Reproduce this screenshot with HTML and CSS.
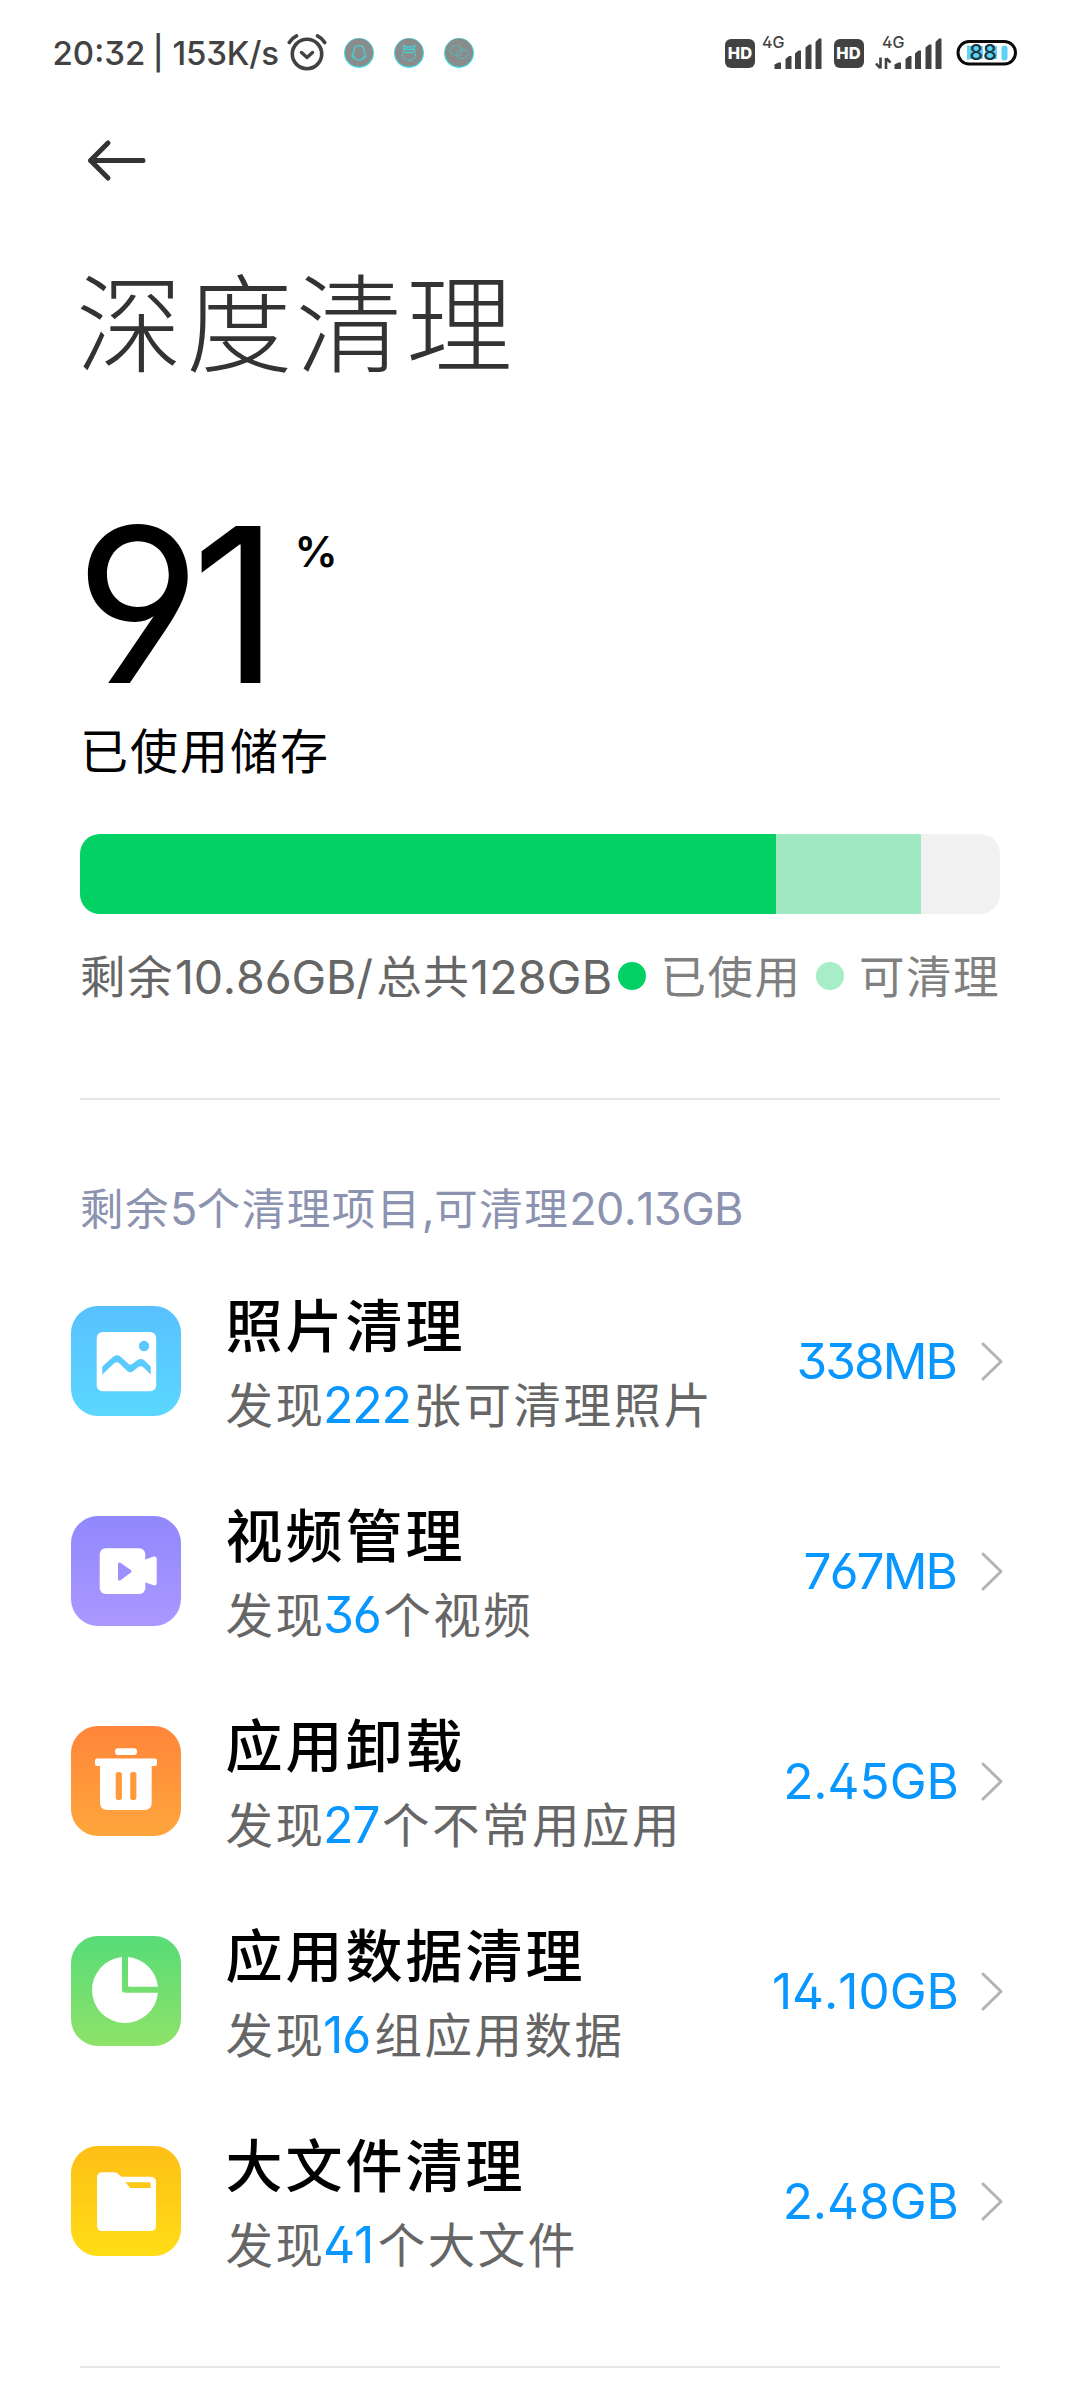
FILE: index.html
```html
<!DOCTYPE html>
<html lang="zh-CN">
<head>
<meta charset="utf-8">
<title>深度清理</title>
<link rel="stylesheet" href="styles.css">
</head>
<body>
<header class="status">
  <div class="status-left">
    <span class="clock">20:32</span>
    <span class="bar-sep">|</span>
    <span class="speed">153K/s</span>
    <svg class="alarm" width="40" height="38" viewBox="0 0 40 38" fill="none" stroke="#424242" stroke-linecap="round" stroke-linejoin="round">
      <circle cx="20" cy="21" r="14.7" stroke-width="3.6"/>
      <path d="M14.5 19.5l5.5 5 5.500-5" stroke-width="3.400"/>
      <path d="M2.300 9.500C4 6.500 6.500 4.300 9.500 2.800M37.700 9.500C36 6.500 33.500 4.300 30.500 2.800" stroke-width="3.600"/>
    </svg>
    <svg class="app-dot" width="34" height="34" viewBox="0 0 34 34">
      <circle cx="17" cy="17" r="15" fill="#40dbe0"/><circle cx="17" cy="16.600" r="14" fill="#8b8b8b"/>
      <path d="M17 9.500c-3.500 0-5 2.500-5 5.500-1.500 2.500-2.300 4.500-1.500 6 1 .3 1.500-.5 1.500-.5.5 2.500 2.500 3.500 5 3.500s4.500-1 5-3.500c0 0 .5.8 1.500.5.8-1.500 0-3.500-1.500-6 0-3-1.500-5.500-5-5.500z" fill="none" stroke="#4dc8cd" stroke-width="1.500"/>
    </svg>
    <svg class="app-dot" width="34" height="34" viewBox="0 0 34 34">
      <circle cx="17" cy="17" r="15" fill="#40dbe0"/><circle cx="17" cy="16.600" r="14" fill="#8b8b8b"/>
      <g fill="none" stroke="#4dc8cd" stroke-width="1.400"><path d="M11.500 14.500V9.500l3 1.500h5l3-1.500v5M12 13.500h10M12 16.500h10"/><circle cx="17" cy="18" r="6.500" stroke-dasharray="2 1"/></g>
    </svg>
    <svg class="app-dot" width="34" height="34" viewBox="0 0 34 34">
      <circle cx="17" cy="17" r="15" fill="#40dbe0"/><circle cx="17" cy="16.600" r="14" fill="#8b8b8b"/>
      <g fill="none" stroke="#4dc0c5" stroke-width="1.200" stroke-dasharray="2 1"><ellipse cx="14" cy="14.500" rx="6" ry="5"/><ellipse cx="20.500" cy="18" rx="5.500" ry="4.500"/></g>
    </svg>
  </div>
  <div class="status-right">
    <span class="hd">HD</span>
    <svg class="sig" width="62" height="38" viewBox="0 0 62 38">
      <text class="net" x="0" y="15">4G</text>
      <g fill="#424242"><path d="M12.500 36v-4.500l4-2h2.500V36z"/><path d="M23.500 36V26l3.500-3h2.500v13z"/><path d="M33 36V20.500l3.500-3h2.500V36z"/><path d="M43.500 36V14.500l3.500-3h2.500V36z"/><path d="M53.500 36V9l3.500-3.500h2.500V36z"/></g>
    </svg>
    <span class="hd">HD</span>
    <svg class="sig sig-b" width="69" height="38" viewBox="0 0 69 38">
      <text class="net" x="7" y="15">4G</text>
      <path d="M5.500 24.500v11M5 35l-4-4.500M11 36V25M11.500 25.500l4 4" stroke="#424242" stroke-width="2.600" fill="none"/>
      <g fill="#424242" transform="translate(7)"><path d="M12.500 36v-4.500l4-2h2.500V36z"/><path d="M23.500 36V26l3.500-3h2.500v13z"/><path d="M33 36V20.500l3.500-3h2.500V36z"/><path d="M43.500 36V14.500l3.500-3h2.500V36z"/><path d="M53.500 36V9l3.500-3.500h2.500V36z"/></g>
    </svg>
    <svg class="battery" width="62" height="28" viewBox="0 0 62 28">
      <rect x="2" y="2.500" width="57.500" height="22.500" rx="11.200" fill="#fff" stroke="#0a0a0a" stroke-width="3"/>
      <path d="M11 6.500h3v14h-3zM14 7h13v13H14zM29 7h12v13H29z" fill="#5cd3f5"/><rect x="45.500" y="6.500" width="6" height="15" rx="3" fill="#5cd3f5"/>
      <text x="27" y="21" text-anchor="middle" class="level">88</text>
    </svg>
  </div>
</header>

<nav class="nav">
  <svg width="60" height="44" viewBox="0 0 60 44" fill="none" stroke="#333" stroke-width="5" stroke-linecap="round" stroke-linejoin="round"><path d="M22 5L4.500 22.500 22 40M4.500 22.500H57"/></svg>
</nav>

<main>
  <h1 class="title">深度清理</h1>
  <section class="usage">
    <div class="percent"><span class="num">91</span><span class="unit">%</span></div>
    <div class="caption">已使用储存</div>
    <div class="meter"><div class="used" style="width:696px"></div><div class="cleanable" style="width:145px"></div></div>
    <div class="legend">
      <div class="total">剩余<span class="lat">10.86GB</span><span class="slash">/</span>总共<span>128GB</span></div>
      <div class="key key-used"><i class="dot"></i>已使用</div>
      <div class="key key-clean"><i class="dot light"></i>可清理</div>
    </div>
  </section>
  <hr class="rule">
  <h2 class="section-label">剩余<span>5</span>个清理项目<span>,</span>可清理<span>20.13GB</span></h2>
  <ul class="list">
    <li class="row">
      <svg class="icon" viewBox="0 0 110 110">
        <defs><linearGradient id="g1" x2="0" y2="1"><stop stop-color="#57c1ff"/><stop offset="1" stop-color="#5bd7ff"/></linearGradient></defs>
        <rect width="110" height="110" rx="27" fill="url(#g1)"/>
        <rect x="25.700" y="26" width="59.500" height="59.300" rx="6" fill="#fff"/>
        <circle cx="73" cy="40" r="5.200" fill="#5ac8ff"/>
        <path d="M31.300 60.500L42.500 50.500Q46 48 49.500 50.500L57.500 58Q59.300 59.500 61.200 58L66.500 54Q70 52 73.200 54.200L79.700 60.500V68.500L72.500 61.500Q70 59 67 61.200L62 65.200Q59.300 67.300 56.500 65.200L48.500 57.500Q46 55 43.200 57.200L31.300 68.500Z" fill="#5acbff"/>
      </svg>
      <div class="info"><h3>照片清理</h3><p>发现<b>222</b>张可清理照片</p></div>
      <span class="size mb">338MB</span>
      <svg class="chev" viewBox="0 0 24 42"><path d="M3 4l18 17.500L3 39"/></svg>
    </li>
    <li class="row">
      <svg class="icon" viewBox="0 0 110 110">
        <defs><linearGradient id="g2" x2="0" y2="1"><stop stop-color="#9088fd"/><stop offset="1" stop-color="#ab98ff"/></linearGradient></defs>
        <rect width="110" height="110" rx="27" fill="url(#g2)"/>
        <rect x="28.700" y="32.300" width="45.600" height="45.700" rx="6" fill="#fff"/>
        <path d="M73 43.700Q74.500 43.500 76 43L82.500 40.600Q85.700 39.800 85.700 43V67Q85.700 70 82.500 69.300L76 67Q74.500 66.300 73 66.300Z" fill="#fff"/>
        <path d="M48.500 48l10.500 7.300-10.500 7.700z" fill="#9b90fe" stroke="#9b90fe" stroke-width="3" stroke-linejoin="round"/>
      </svg>
      <div class="info"><h3>视频管理</h3><p>发现<b>36</b>个视频</p></div>
      <span class="size mb">767MB</span>
      <svg class="chev" viewBox="0 0 24 42"><path d="M3 4l18 17.500L3 39"/></svg>
    </li>
    <li class="row">
      <svg class="icon" viewBox="0 0 110 110">
        <defs><linearGradient id="g3" x2="0" y2="1"><stop stop-color="#ff853a"/><stop offset="1" stop-color="#ffa63c"/></linearGradient></defs>
        <rect width="110" height="110" rx="27" fill="url(#g3)"/>
        <g fill="#fff"><rect x="44" y="22.200" width="22" height="6.800" rx="3"/><rect x="24" y="32.500" width="62" height="7.500" rx="2"/><path d="M29 37h51.700v39.500q0 7.500-7.500 7.500H36.500q-7.500 0-7.500-7.500z"/></g>
        <g fill="#ff9a3b"><rect x="44.700" y="46" width="6.200" height="28" rx="2.500"/><rect x="59.200" y="46" width="6.200" height="28" rx="2.500"/></g>
      </svg>
      <div class="info"><h3>应用卸载</h3><p>发现<b>27</b>个不常用应用</p></div>
      <span class="size">2.45GB</span>
      <svg class="chev" viewBox="0 0 24 42"><path d="M3 4l18 17.500L3 39"/></svg>
    </li>
    <li class="row">
      <svg class="icon" viewBox="0 0 110 110">
        <defs><linearGradient id="g4" x2="0" y2="1"><stop stop-color="#57dc77"/><stop offset="1" stop-color="#8ee269"/></linearGradient></defs>
        <rect width="110" height="110" rx="27" fill="url(#g4)"/>
        <g fill="#fff"><path d="M51 21.100V53.700Q51 56.700 54 56.700H86.900A33 33 0 1 1 51 21.100Z"/><path d="M57 21.100A33 33 0 0 1 86.900 50.700H58.500Q57 50.700 57 49.200Z"/></g>
      </svg>
      <div class="info"><h3>应用数据清理</h3><p>发现<b class="ones">16</b>组应用数据</p></div>
      <span class="size">14.10GB</span>
      <svg class="chev" viewBox="0 0 24 42"><path d="M3 4l18 17.500L3 39"/></svg>
    </li>
    <li class="row">
      <svg class="icon" viewBox="0 0 110 110">
        <defs><linearGradient id="g5" x2="0" y2="1"><stop stop-color="#fdbf17"/><stop offset="1" stop-color="#ffdd15"/></linearGradient></defs>
        <rect width="110" height="110" rx="27" fill="url(#g5)"/>
        <path d="M31.500 26.300H43Q45.700 26.300 47.300 28L50.300 30.700H79.500Q85 30.700 85 36.200V79.500Q85 85 79.500 85H31.500Q26 85 26 79.500V31.800Q26 26.300 31.500 26.300Z" fill="#fff"/>
        <path d="M54.300 36.300H78Q79.700 36.300 79.700 38V42H59.300Z" fill="#fec816"/>
      </svg>
      <div class="info"><h3>大文件清理</h3><p>发现<b class="ones">41</b>个大文件</p></div>
      <span class="size">2.48GB</span>
      <svg class="chev" viewBox="0 0 24 42"><path d="M3 4l18 17.500L3 39"/></svg>
    </li>
  </ul>
  <hr class="rule rule-end">
</main>
</body>
</html>
```
FILE: styles.css
```css
* { box-sizing: border-box; margin: 0; padding: 0; }

body {
  width: 1080px;
  height: 2400px;
  overflow: hidden;
  background: #fff;
  color: #000;
  font-family: Inter, "Noto Sans CJK SC", sans-serif;
  font-feature-settings: "ss01", "cv03", "cv04";
  font-kerning: none;
  white-space: nowrap;
}

svg { display: block; flex: none; }

.status {
  display: flex;
  justify-content: space-between;
  height: 106px;
  padding: 0 62.5px 0 52.5px;
  color: #424242;
  font-size: 33px;
  font-weight: 500;
  line-height: 106px;
}
.status-left, .status-right { display: flex; align-items: center; }
.clock { width: 100px; }
.bar-sep { width: 20px; }
.speed { width: 114.5px; letter-spacing: -0.2px; }
.alarm { margin-right: 15px; margin-top: -3px; }
.app-dot { margin-right: 16px; }
.hd {
  width: 30px;
  height: 29px;
  border-radius: 6px;
  background: #424242;
  color: #fff;
  font-size: 16.5px;
  font-weight: 800;
  line-height: 29px;
  text-align: center;
}
.sig { margin: -2px 10px 0 6.500px; }
.sig-b { margin: -2px 11.500px 0 11.500px; }
.net { font-size: 16px; font-weight: 500; fill: #424242; }
.level { font-size: 22px; font-weight: 500; fill: #1c3942; }

.nav { display: flex; align-items: center; height: 108px; padding-left: 86px; }

.title {
  padding: 4px 0 0 76px;
  color: #333;
  font-family: "Noto Sans CJK SC", sans-serif;
  font-size: 106.5px;
  font-weight: 300;
  letter-spacing: 3.5px;
  line-height: 200px;
}

.usage { padding: 109px 80px 0; }
.percent { display: flex; align-items: flex-start; height: 156px; margin-left: -5px; }
.num { font-size: 216px; font-weight: 430; letter-spacing: -9px; line-height: 156px; }
.unit { margin-left: 24px; font-size: 43px; font-weight: 600; line-height: 48px; }
.caption { font-size: 48px; letter-spacing: 2px; line-height: 137px; }

.meter {
  display: flex;
  height: 80px;
  margin-top: 14px;
  overflow: hidden;
  border-radius: 20px;
  background: #f1f1f1;
}
.used { background: #03d163; }
.cleanable { background: #a0e8c2; }

.legend {
  display: flex;
  height: 127px;
  color: #666;
  font-size: 45.5px;
  letter-spacing: 1.5px;
  line-height: 127px;
}
.legend span { font-size: 46.5px; letter-spacing: 0.2px; }
.legend .lat { margin-left: 1px; letter-spacing: -0.2px; }
.legend .slash { margin-right: 3px; }
.total { width: 539px; }
.key { display: flex; align-items: center; color: #808080; }
.key-used { width: 199px; }
.dot { width: 28px; height: 28px; margin: -3px 15px 0 0; border-radius: 50%; background: #03d163; }
.light { background: #a6edc8; }

.rule { height: 2px; margin: 57px 80px 0; border: 0; background: #e6e6e6; }

.section-label {
  padding: 62px 80px 0;
  color: #8c93b0;
  font-size: 43.5px;
  font-weight: 400;
  letter-spacing: 1.5px;
  line-height: 93px;
}
.section-label span { font-size: 45px; letter-spacing: -0.6px; }

.list { padding: 0 76px 0 71px; list-style: none; }
.row { display: flex; align-items: center; height: 210px; }
.icon { width: 110px; height: 110px; }
.info { flex: 1; padding-top: 10px; margin-left: 44.5px; }
.info h3 { font-size: 57px; font-weight: 500; letter-spacing: 3px; line-height: 79px; }
.info p { color: #666; font-size: 47.5px; letter-spacing: 2.5px; line-height: 79px; }
.info b { margin: 0 2.5px 0 -2.5px; color: #0896ff; font-size: 50px; font-weight: 430; letter-spacing: -1.2px; }
.info .ones { margin-right: 4.5px; }
.size { margin-right: 21px; color: #0896ff; font-size: 49.5px; font-weight: 430; line-height: 79px; }
.mb { margin-right: 24px; letter-spacing: -1.9px; }
.chev { width: 24px; height: 42px; fill: none; stroke: #b3b3b3; stroke-width: 3; stroke-linecap: round; stroke-linejoin: round; }

.rule-end { margin-top: 60px; }
```
